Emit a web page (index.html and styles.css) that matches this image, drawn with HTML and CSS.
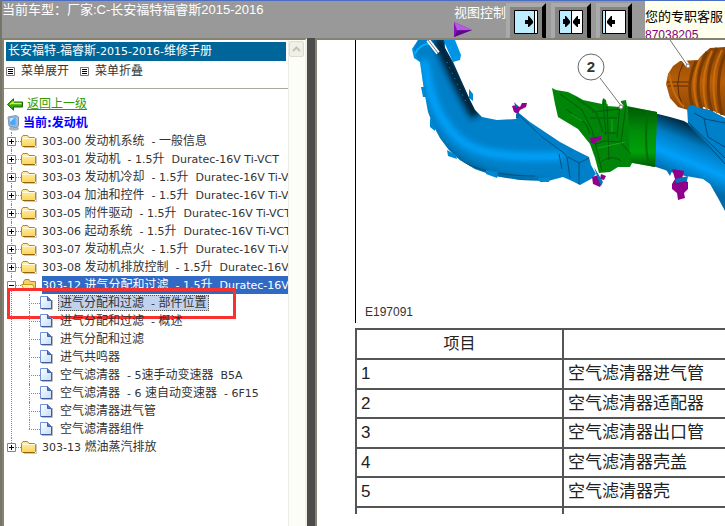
FILE: index.html
```html
<!DOCTYPE html>
<html lang="zh-CN">
<head>
<meta charset="utf-8">
<title>长安福特-福睿斯-2015-2016-维修手册</title>
<link rel="stylesheet" href="styles.css">
</head>
<body>
<svg class="defs" aria-hidden="true">
  <defs>
    <linearGradient id="fold" x1="0" y1="0" x2="0" y2="1"><stop offset="0" stop-color="#fff2b0"/><stop offset="1" stop-color="#fbd45a"/></linearGradient>
    <linearGradient id="page" x1="0" y1="0" x2="1" y2="1"><stop offset="0" stop-color="#fff"/><stop offset="1" stop-color="#c3dcfb"/></linearGradient>
    <symbol id="folder" viewBox="0 0 16 14">
      <path d="M3 13.500H15.500V4" fill="none" stroke="#c8c8c8"/>
      <path d="M.5 3.500 2 1.500H6.500L8 3.500H13.500L14.500 4.500V11.500L13.500 12.500H1.500L.5 11.500Z" fill="url(#fold)" stroke="#b8861e"/>
      <path d="M1.500 4.500H13.500" stroke="#fffbe0"/><path d="M2 12.500H13.500" stroke="#94640a"/>
    </symbol>
    <symbol id="folder-open" viewBox="0 0 16 14">
      <path d="M2.500 12.500V3.500L4 1.500H8L9.500 3.500H14.500V12.500Z" fill="#f4d06a" stroke="#b8861e"/>
      <path d="M.5 6.500H11.500L14.500 12.500H3.500Z" fill="#fff29a" stroke="#c79a20"/>
    </symbol>
    <symbol id="file" viewBox="0 0 13 14">
      <path d="M2 13.500H12.500V4" fill="none" stroke="#bbb"/>
      <path d="M.5.500H7.500L11.500 4.500V12.500H.5Z" fill="url(#page)" stroke="#7393d8"/>
      <path d="M7.500.500V4.500H11.500" fill="#4c78ce" stroke="#3b5fae"/><path d="M11.500 5V12.500H1" fill="none" stroke="#405b99"/>
    </symbol>
    <symbol id="list" viewBox="0 0 9 9"><path d="M.5.500H8.500V8.500H.5Z" fill="#fff" stroke="#777"/><path d="M2 2.500H7M2 4.500H7M2 6.500H7" stroke="#000"/></symbol>
    <symbol id="plus" viewBox="0 0 9 9"><path d="M.5.500H8.500V8.500H.5Z" fill="#fff" stroke="#848484"/><path d="M2 4.500H7M4.500 2V7" stroke="#000"/></symbol>
    <symbol id="minus" viewBox="0 0 9 9"><path d="M.5.500H8.500V8.500H.5Z" fill="#fff" stroke="#848484"/><path d="M2 4.500H7" stroke="#000"/></symbol>
  </defs>
</svg>

<header class="top">
  <p class="model">当前车型：厂家:C-长安福特福睿斯2015-2016</p>
  <div class="view">
    <span>视图控制</span>
    <svg width="18" height="15" viewBox="0 0 18 15"><path d="M0 0 18 8 0 15Z" fill="#8414b4"/><path d="M0 0 18 8 3 8Z" fill="#b55be0"/><path d="M0 15 18 8 3 9Z" fill="#5d0888"/></svg>
  </div>
  <div class="modes">
    <button type="button" aria-label="展开左侧"><svg width="24" height="24" viewBox="0 0 24 24"><path d="M.5.500H23.500V23.500H.5Z" fill="#fff" stroke="#000"/><path d="M1 1H20V23H1Z" fill="#bdeeff"/><path d="M20.500 1V23" stroke="#000"/><path d="M11 10H14V6H15L19 11V13L15 17H14V14H11Z"/></svg></button>
    <button type="button" aria-label="两栏视图"><svg width="24" height="24" viewBox="0 0 24 24"><path d="M.5.500H23.500V23.500H.5Z" fill="#fff" stroke="#000"/><path d="M1 1H12V23H1Z" fill="#bdeeff"/><path d="M12.500 1V23" stroke="#000"/><path d="M4 9H6V6H7L11 11V13L7 17H6V14H4ZM21 9H19V6H18L14 11V13L18 17H19V14H21Z"/></svg></button>
    <button type="button" aria-label="收起左侧"><svg width="24" height="24" viewBox="0 0 24 24"><path d="M.5.500H23.500V23.500H.5Z" fill="#fff" stroke="#000"/><path d="M1 1H3V23H1Z" fill="#bdeeff"/><path d="M3.500 1V23" stroke="#000"/><path d="M13 10H10V6H9L5 11V13L9 17H10V14H13Z"/></svg></button>
  </div>
  <aside class="service"><span>您的专职客服</span><span class="phone">87038205</span></aside>
</header>

<div class="frames">
  <nav class="side">
    <div class="side-body">
      <h1 class="book"><span>长安福特</span>-<span>福睿斯</span>-2015-2016-<span>维修手册</span></h1>
      <div class="tools">
        <button type="button"><svg width="9" height="9"><use href="#list"/></svg>菜单展开</button>
        <button type="button"><svg width="9" height="9"><use href="#list"/></svg>菜单折叠</button>
      </div>
      <div class="nav-area">
        <a class="back" href="#"><svg width="16" height="13" viewBox="0 0 16 13"><path d="M.5 6.500 6.500.800V4H15.500V9H6.500V12.200Z" fill="#2fae18" stroke="#1d5c0c"/><path d="M3 6.500 6 4V5.500H14.500" fill="none" stroke="#e3ec28" stroke-width="1.500"/></svg><span>返回上一级</span></a>
        <p class="current"><svg width="13" height="16" viewBox="0 0 13 16"><ellipse cx="7" cy="13.500" rx="5" ry="2" fill="#aab4bd"/><path d="M1 2 9 .5 11.500 2V11L9 12.500 2 11Z" fill="#9ebbe2" stroke="#8494ac"/><path d="M2 3 8.500 2V10.500L3 9.500Z" fill="#49a7f5"/><path d="M2.500 3.500 8 2.500 3 7Z" fill="#bfe6ff"/></svg>当前:发动机</p>
        <ul class="tree">
          <li><div class="row"><button type="button" aria-label="展开"><svg width="9" height="9"><use href="#plus"/></svg></button><i></i><svg width="16" height="14"><use href="#folder"/></svg><a href="#">303-00 <span>发动机系统</span>&nbsp; - <span>一般信息</span></a></div></li>
          <li><div class="row"><button type="button" aria-label="展开"><svg width="9" height="9"><use href="#plus"/></svg></button><i></i><svg width="16" height="14"><use href="#folder"/></svg><a href="#">303-01 <span>发动机</span>&nbsp; - 1.5<span>升</span>&nbsp; Duratec-16V Ti-VCT</a></div></li>
          <li><div class="row"><button type="button" aria-label="展开"><svg width="9" height="9"><use href="#plus"/></svg></button><i></i><svg width="16" height="14"><use href="#folder"/></svg><a href="#">303-03 <span>发动机冷却</span>&nbsp; - 1.5<span>升</span>&nbsp; Duratec-16V Ti-VCT</a></div></li>
          <li><div class="row"><button type="button" aria-label="展开"><svg width="9" height="9"><use href="#plus"/></svg></button><i></i><svg width="16" height="14"><use href="#folder"/></svg><a href="#">303-04 <span>加油和控件</span>&nbsp; - 1.5<span>升</span>&nbsp; Duratec-16V Ti-VCT</a></div></li>
          <li><div class="row"><button type="button" aria-label="展开"><svg width="9" height="9"><use href="#plus"/></svg></button><i></i><svg width="16" height="14"><use href="#folder"/></svg><a href="#">303-05 <span>附件驱动</span>&nbsp; - 1.5<span>升</span>&nbsp; Duratec-16V Ti-VCT</a></div></li>
          <li><div class="row"><button type="button" aria-label="展开"><svg width="9" height="9"><use href="#plus"/></svg></button><i></i><svg width="16" height="14"><use href="#folder"/></svg><a href="#">303-06 <span>起动系统</span>&nbsp; - 1.5<span>升</span>&nbsp; Duratec-16V Ti-VCT</a></div></li>
          <li><div class="row"><button type="button" aria-label="展开"><svg width="9" height="9"><use href="#plus"/></svg></button><i></i><svg width="16" height="14"><use href="#folder"/></svg><a href="#">303-07 <span>发动机点火</span>&nbsp; - 1.5<span>升</span>&nbsp; Duratec-16V Ti-VCT</a></div></li>
          <li><div class="row"><button type="button" aria-label="展开"><svg width="9" height="9"><use href="#plus"/></svg></button><i></i><svg width="16" height="14"><use href="#folder"/></svg><a href="#">303-08 <span>发动机排放控制</span>&nbsp; - 1.5<span>升</span>&nbsp; Duratec-16V Ti-VCT</a></div></li>
          <li><div class="row open"><button type="button" aria-label="折叠"><svg width="9" height="9"><use href="#minus"/></svg></button><i></i><svg width="16" height="14"><use href="#folder-open"/></svg><a href="#">303-12 <span>进气分配和过滤</span>&nbsp; - 1.5<span>升</span>&nbsp; Duratec-16V Ti-VCT</a></div>
            <ul>
              <li class="marked"><div class="row picked"><i></i><svg width="13" height="14"><use href="#file"/></svg><a href="#"><span>进气分配和过滤</span>&nbsp; - <span>部件位置</span></a></div></li>
              <li><div class="row"><i></i><svg width="13" height="14"><use href="#file"/></svg><a href="#"><span>进气分配和过滤</span>&nbsp; - <span>概述</span></a></div></li>
              <li><div class="row"><i></i><svg width="13" height="14"><use href="#file"/></svg><a href="#"><span>进气分配和过滤</span></a></div></li>
              <li><div class="row"><i></i><svg width="13" height="14"><use href="#file"/></svg><a href="#"><span>进气共鸣器</span></a></div></li>
              <li><div class="row"><i></i><svg width="13" height="14"><use href="#file"/></svg><a href="#"><span>空气滤清器</span>&nbsp; - 5<span>速手动变速器</span>&nbsp; B5A</a></div></li>
              <li><div class="row"><i></i><svg width="13" height="14"><use href="#file"/></svg><a href="#"><span>空气滤清器</span>&nbsp; - 6 <span>速自动变速器</span>&nbsp; - 6F15</a></div></li>
              <li><div class="row"><i></i><svg width="13" height="14"><use href="#file"/></svg><a href="#"><span>空气滤清器进气管</span></a></div></li>
              <li><div class="row"><i></i><svg width="13" height="14"><use href="#file"/></svg><a href="#"><span>空气滤清器组件</span></a></div></li>
            </ul>
          </li>
          <li><div class="row"><button type="button" aria-label="展开"><svg width="9" height="9"><use href="#plus"/></svg></button><i></i><svg width="16" height="14"><use href="#folder"/></svg><a href="#">303-13 <span>燃油蒸汽排放</span></a></div></li>
        </ul>
      </div>
    </div>
    <div class="scroll"><button type="button" disabled aria-label="向上"><svg width="9" height="6" viewBox="0 0 9 6"><path d="M1 5 4.500 1.500 8 5" fill="none" stroke="#c4c3b8" stroke-width="2"/></svg></button></div>
  </nav>
  <div class="split"></div>
  <main class="content">
    <div class="doc">
      <figure>
        <svg width="370" height="283" viewBox="356 40 370 283" role="img" aria-label="进气部件位置">
          <defs>
            <linearGradient id="collar" x1="0" y1="0" x2="0" y2="1"><stop offset="0" stop-color="#005a05"/><stop offset=".4" stop-color="#008c08"/><stop offset=".75" stop-color="#00a00a"/><stop offset="1" stop-color="#005a05"/></linearGradient>
            <linearGradient id="pipe" gradientUnits="userSpaceOnUse" x1="700" y1="130" x2="680" y2="178"><stop offset="0" stop-color="#00304c"/><stop offset=".3" stop-color="#007cc2"/><stop offset=".65" stop-color="#00a0fa"/><stop offset="1" stop-color="#006ba8"/></linearGradient>
            <linearGradient id="hose" x1="0" y1="0" x2="0" y2="1"><stop offset="0" stop-color="#8a4604"/><stop offset=".5" stop-color="#b75d08"/><stop offset="1" stop-color="#8a4604"/></linearGradient>
            <filter id="soft" x="-20%" y="-20%" width="140%" height="140%"><feGaussianBlur stdDeviation="3"/></filter>
            <clipPath id="body"><path id="duct-shape" d="M418 40 414 48 417 58 420 62 424 90 428 112 433 125 440 138 449 150 460 160 475 169 495 176 520 180 548 181 563 177 572 181 580 185 591 179 596 174 591 165 589 157 575 150 560 142 545 132 530 122 519 113 516 119 497 120 482 117 475 110 470 100 461 80 453 62 445 48 444 40Z"/></clipPath>
          </defs>
          <path d="M418 40 412 49 414 58 420 62 424 55 445 44 453 62 460 60 461 55 455 40Z" fill="#0094e6"/>
          <g clip-path="url(#body)">
            <path d="M400 30H600V190H400Z" fill="#0080c8"/>
            <g fill="none" filter="url(#soft)">
              <path d="M438 38C449 66 460 88 476 116" stroke="#001c30" stroke-width="11"/>
              <path d="M424 60C429 92 435 110 446 124C463 152 492 159 563 156" stroke="#00a4ff" stroke-width="8"/>
              <path d="M426 124C445 157 480 180 548 183" stroke="#006196" stroke-width="6"/>
            </g>
            <path d="M449 153C465 167 495 176 535 176M519 115 542 137 564 153 567 157 570 178M568 157 579 163V185M579 163 589 158M559 154 562 169" fill="none" stroke="#00507f" stroke-width="1"/>
          </g>
          <path d="M415 54Q420 42 434 44" fill="none" stroke="#00b0ff" stroke-width="2"/>
          <path d="M447 62 466 102" stroke="#2596cf" stroke-width="1" stroke-dasharray="1 5"/>
          <path d="M421 87H426V97H423ZM430 118 435 125 435 131 430 127ZM447 150 456 155 457 159 448 156ZM486 170 498 172 497 178 486 174ZM538 178 550 177 549 182 540 182ZM469 89 473 94 473 101 469 98Z" fill="#0087d1"/>
          <path d="M512 106 516 105 520 107 522 103 527 103 526 107 520 110 518 114 514 112Z" fill="#92008d"/><path d="M514 102 518 106 516 108ZM516 114 519 112V118H516Z" fill="#006ba8"/>
          <path d="M666 84 668 74 673 66 680 61 698 60 703 54 710 48 725 47V116L704 107 688 110 678 107 670 98Z" fill="url(#hose)"/>
          <path d="M684 62Q672 83 683 107M667 82H690M668 86H688" fill="none" stroke="#5a2c00" stroke-width="1"/>
          <path d="M669 73Q673 97 684 107" fill="none" stroke="#c56b10" stroke-width="2"/>
          <path d="M696 61Q685 86 693 108M707 52Q692 80 702 110M717 48Q702 77 712 113M727 50Q713 77 722 115" fill="none" stroke="#7a3b00" stroke-width="3"/>
          <path d="M701 57Q689 82 698 108M712 51Q698 80 707 110M722 50Q708 76 717 113" fill="none" stroke="#cb6d0c" stroke-width="2"/>
          <path d="M654 113 670 117 684 121 704 133 725 158V211L718 198 710 184 703 179 680 175 653 166Z" fill="url(#pipe)"/>
          <path d="M687 107 692 105 700 108 710 110 725 118V161L710 148 688 124Z" fill="#0080c8"/><path d="M688 122 725 158M691 126 725 164M694 113 705 119 725 123M704 119 708 137 725 147" fill="none" stroke="#004a77"/>
          <path d="M552 88 556 90 568 92 576 96 583 100 602 104 603 98 606 100 607 106 620 107 621 101 626 100 627 106 657 112 655 167 632 163 630 167 618 167 610 172 599 173 595 158 590 144 578 129 558 117 555 104Z" fill="#008509"/>
          <path d="M628 107 657 112 655 167 630 162Z" fill="url(#collar)"/>
          <path d="M560 94 582 110 592 130 602 171M566 109 586 124 590 134M603 100 606 136M607 104 609 160M592 112 620 109M620 103 617 138M626 105 621 142M596 144 604 141 620 142 631 154M600 162Q613 154 621 161" fill="none" stroke="#005c07" stroke-width="1"/>
          <path d="M576 98 596 112 603 132M648 111Q644 135 648 163M590 118H617M604 133H618" fill="none" stroke="#006d08" stroke-width="2"/>
          <path d="M571 114 582 121M598 148 625 142M612 119V132" fill="none" stroke="#12a81a" stroke-width="1"/>
          <path d="M590 138 601 136V140L597 141 595 144 591 143ZM592 177 598 175 602 183 600 187 593 184ZM601 174 606 176 604 180 600 179ZM672 169 684 171 682 179 688 182 688 189 684 193 685 198 678 200 677 193 672 189 672 184 675 179Z" fill="#90008b"/>
          <path d="M665 168 672 171 670 176ZM675 179 688 176 687 181 676 183ZM594 167 603 182 601 186 598 179Z" fill="#0075b8"/>
          <path d="M600 78 622 107M670 40 688 66M428 40 438 53" stroke="#fff" stroke-width="4"/><path d="M600 78 622 107M670 40 688 66M428 40 438 53" stroke="#777" stroke-width="1"/>
          <circle cx="621" cy="107" r="2" fill="#fff" stroke="#777"/><circle cx="688" cy="66" r="2" fill="#fff" stroke="#777"/>
          <circle cx="591" cy="67" r="13" fill="#fff" stroke="#666"/><text x="591" y="72" class="callout">2</text>
          <text x="365" y="316" class="figure-id">E197091</text>
        </svg>
      </figure>
      <table>
        <thead><tr><th>项目</th><th></th></tr></thead>
        <tbody>
          <tr><td>1</td><td>空气滤清器进气管</td></tr>
          <tr><td>2</td><td>空气滤清器适配器</td></tr>
          <tr><td>3</td><td>空气滤清器出口管</td></tr>
          <tr><td>4</td><td>空气滤清器壳盖</td></tr>
          <tr><td>5</td><td>空气滤清器壳</td></tr>
          <tr><td></td><td></td></tr>
        </tbody>
      </table>
    </div>
  </main>
</div>
</body>
</html>
```
FILE: styles.css
```css
*, *::before, *::after { box-sizing: border-box; }
body {
  margin: 0;
  height: 100vh;
  display: flex;
  flex-direction: column;
  overflow: hidden;
  background: #999;
  border-left: 2px solid #77756a;
  font: 13px/18px "Liberation Sans", "Noto Sans CJK SC", sans-serif;
}
p, h1, ul, figure { margin: 0; padding: 0; }
ul { list-style: none; }
a { color: inherit; text-decoration: none; }
button { padding: 0; border: 0; background: none; font: inherit; color: inherit; }
svg { display: block; flex: none; }
.defs { position: absolute; width: 0; height: 0; }

.top { display: flex; height: 38px; flex: none; overflow: hidden; border-top: 1px solid #4a6cc4; color: #fff; }
.model { flex: 1; white-space: nowrap; }
.view { width: 52px; padding-top: 3px; white-space: nowrap; }
.modes { display: flex; gap: 5px; width: 139px; padding-top: 2px; }
.modes button {
  display: grid;
  place-items: center;
  width: 40px;
  height: 38px;
  flex: none;
  background: #858585;
  border: 4px solid #aaa;
  border-right-color: #000;
  border-bottom-color: #858585;
}
.modes button:last-child { width: 36px; }
.service { width: 80px; padding-top: 7px; background: #ffffed; color: #000; white-space: nowrap; }
.service span { display: block; }
.service .phone { font-size: 12px; color: #800080; }

.frames { display: flex; flex: 1; min-height: 0; }
.side { display: flex; width: 305px; flex: none; background: #fff; border: 2px solid #85836f; border-right: 2px solid #f0efe6; border-bottom: 0; }
.side-body { flex: 1; min-width: 0; overflow: hidden; color: #333; font: 12px/18px "DejaVu Sans", "Noto Sans CJK SC", sans-serif; }
.book { margin: 2px 2px 0; padding-left: 2px; background: #069; color: #fff; font-size: 11px; font-weight: 400; line-height: 19px; white-space: nowrap; }
.book span, .tree span { font-size: 12px; }
.tools { display: flex; gap: 11px; height: 28px; padding: 0 2px; border-bottom: 1px solid #aca899; }
.tools button { display: flex; align-items: center; gap: 6px; height: 20px; }
.nav-area { padding: 6px 0 0 3px; }
.back { display: flex; align-items: center; gap: 4px; color: #390; text-decoration: underline; }
.current { display: flex; align-items: center; gap: 3px; height: 19px; color: #00f; font-weight: 700; }
.tree { font-size: 11px; white-space: nowrap; }
.tree li { position: relative; }
.tree li::before { content: ""; position: absolute; left: 4px; top: 0; bottom: 0; border-left: 1px dotted #888; }
.tree li:last-child::before { bottom: auto; height: 9px; }
.tree ul { padding-left: 18px; }
.row { display: flex; align-items: center; height: 18px; }
.row button { position: relative; flex: none; }
.row i { width: 5px; flex: none; border-top: 1px dotted #888; }
.row a { display: block; flex: none; height: 18px; margin-left: 5px; }
.tree ul .row { padding-left: 4px; }
.tree ul i { width: 11px; }
.tree ul a { padding: 0 2px; }
.open a { background: #316ac5; color: #fff; }
.picked a { height: 16px; line-height: 14px; background: #c1d2ee; border: 1px dotted #555; }
.tree .picked a { padding: 0 1px; }
.marked::after { content: ""; position: absolute; left: -18px; top: -6px; width: 229px; height: 31px; border: 3px solid #f9322f; }
.scroll { width: 17px; background: #fdfdf8; border-left: 1px solid #eeede5; }
.scroll button { display: grid; place-items: center; width: 15px; height: 16px; margin-top: 1px; background: #f1f0e8; border: 1px solid #dddccf; border-radius: 2px; }
.split { width: 8px; flex: none; background: #4c4c4c; }
.content { flex: 1; min-width: 0; display: flex; background: #fff; border: 2px solid #85836f; border-right: 0; border-bottom: 0; padding: 0 0 12px 38px; }
.doc { flex: 1; min-width: 0; overflow: hidden; }
figure { border-left: 1px solid #000; margin-bottom: 5px; }
.callout { font: 700 15px "Liberation Sans", sans-serif; text-anchor: middle; fill: #333; }
.figure-id { font: 12px "Liberation Sans", sans-serif; fill: #333; }
table { width: 620px; table-layout: fixed; border-collapse: collapse; font-size: 17px; line-height: 24px; color: #222; }
th, td { height: 30px; padding: 0 4px; border: 2px solid #555; font-weight: 400; text-align: left; }
tr:nth-child(even) td { height: 29px; }
th { font-size: 16px; }
th:first-child { width: 207px; text-align: center; }
```
